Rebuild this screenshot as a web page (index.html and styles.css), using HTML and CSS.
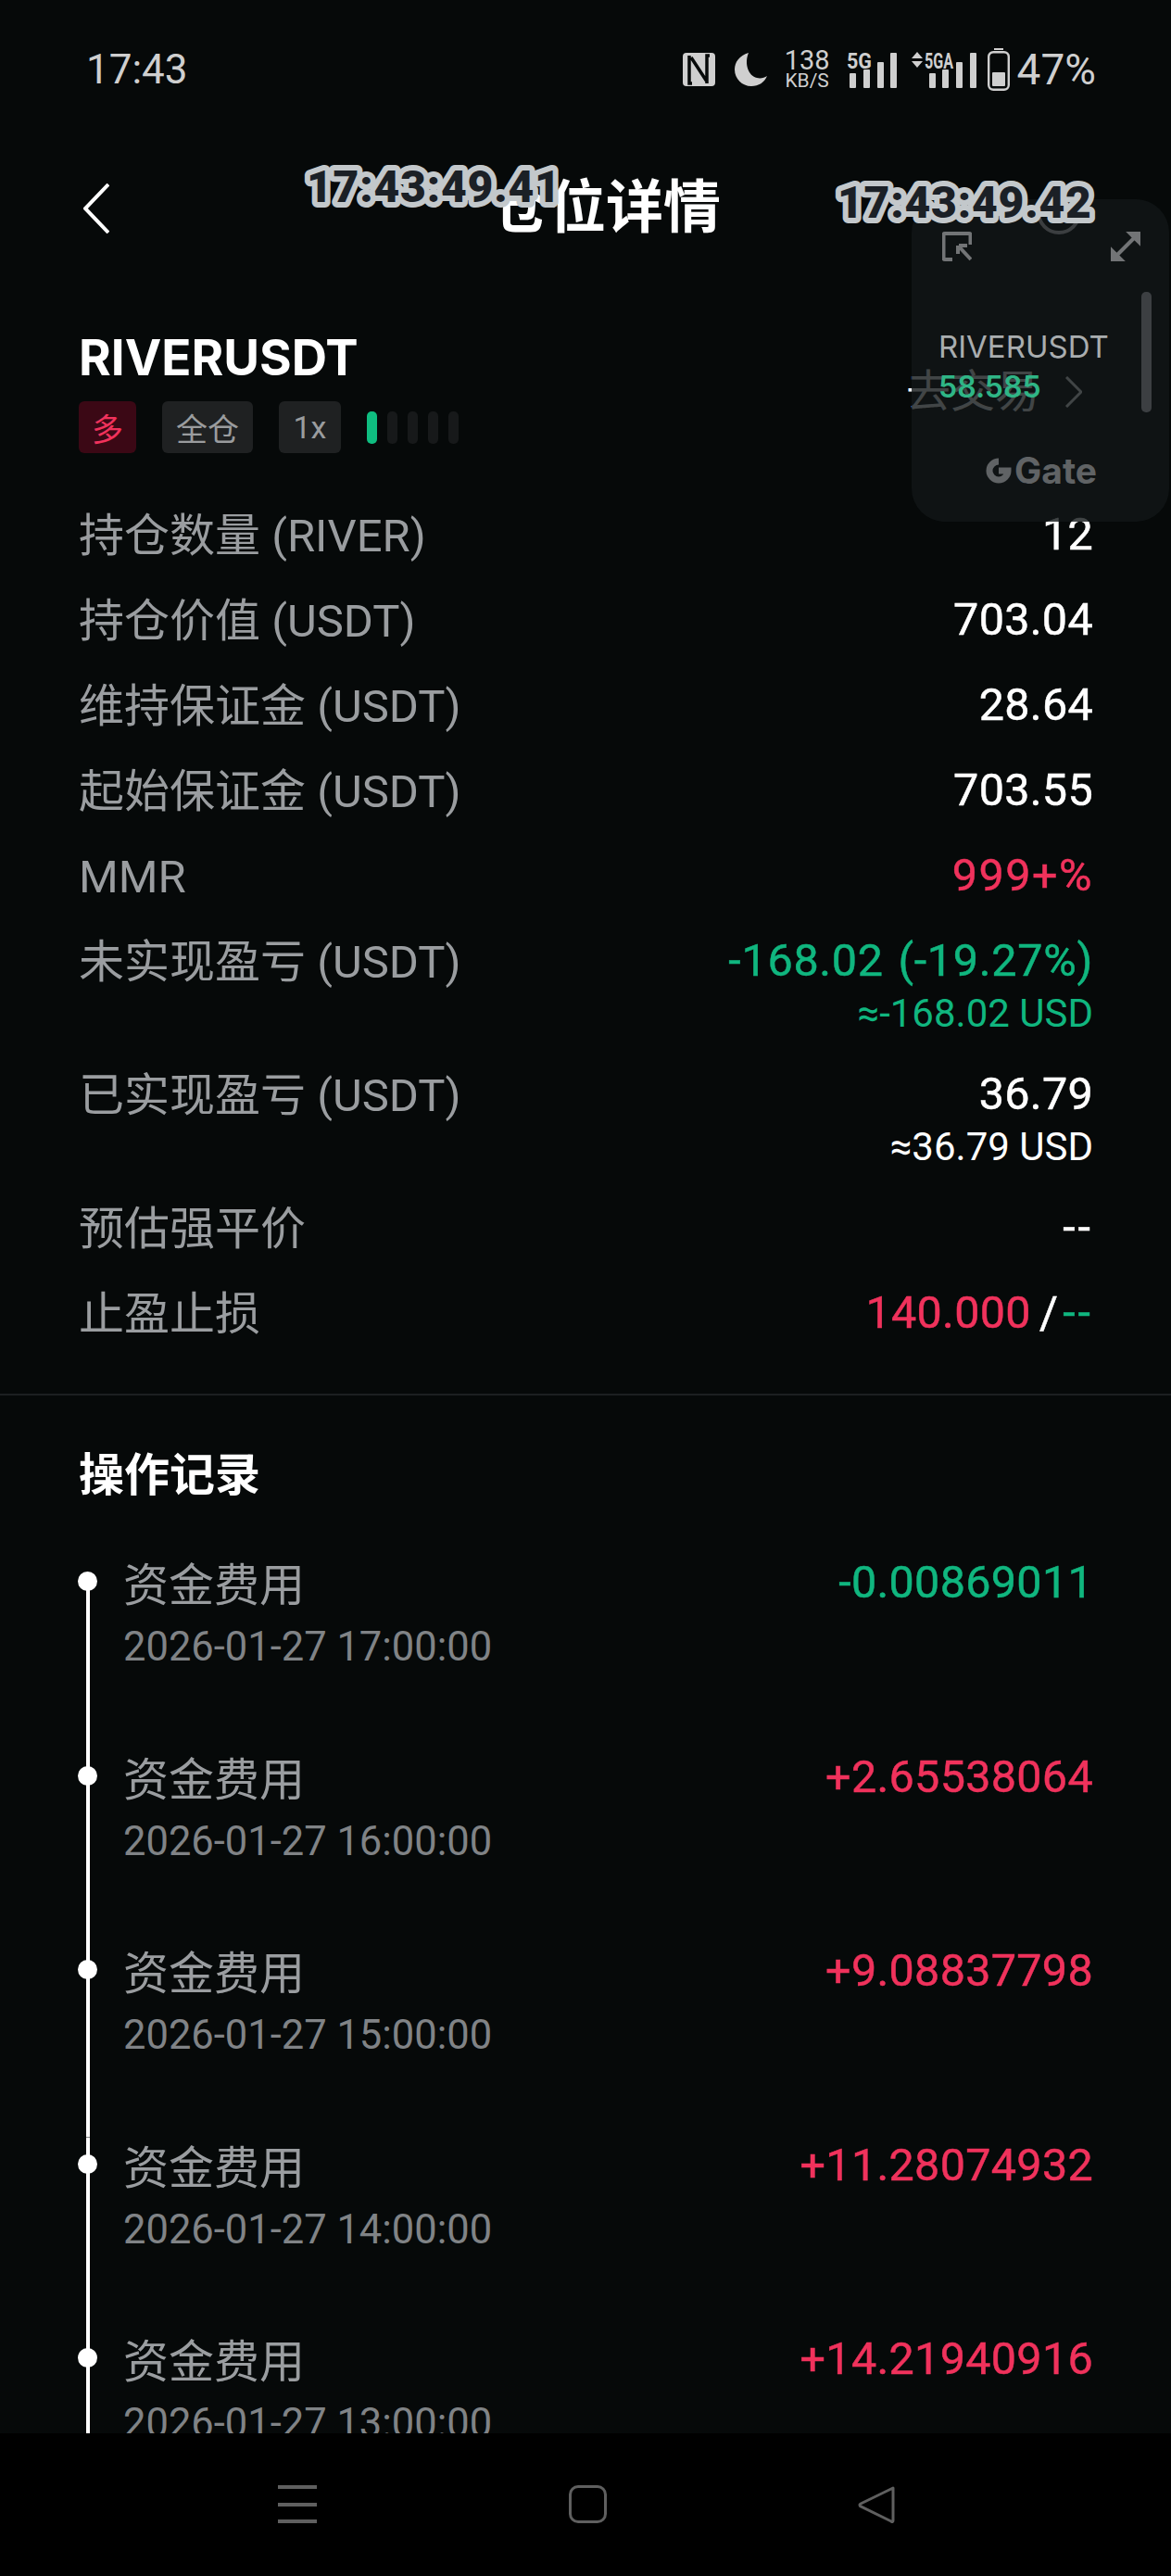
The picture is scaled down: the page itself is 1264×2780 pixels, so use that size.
FILE: index.html
```html
<!DOCTYPE html>
<html lang="zh">
<head>
<meta charset="utf-8">
<title>仓位详情</title>
<link rel="stylesheet" href="styles.css">
</head>
<body>
<div class="page">
  <main class="screen">
    <div class="status">
      <span class="clock">17:43</span>
      <div class="status-right">
        <svg class="ic-nfc" width="35" height="36" viewBox="0 0 35 36"><rect width="35" height="36" rx="4" fill="#cfcfcf"/><path d="M7 3v30h3M26 33V3h3M9 5l17 26" fill="none" stroke="#070a0a" stroke-width="3.5"/></svg>
        <svg class="ic-moon" width="35" height="36" viewBox="0 0 35 36"><path d="M15 0C5 3 0 10 0 18c0 10 8 18 18 18 8 0 14-4 17-11-3 2-7 3-11 2C15 25 10 12 15 0Z" fill="#cfcfcf"/></svg>
        <div class="speed"><span class="speed-num">138</span><span class="speed-unit">KB/S</span></div>
        <svg class="ic-sig1" width="54" height="40" viewBox="0 0 54 40"><text x="0" y="19" class="sig-text" textLength="27" lengthAdjust="spacingAndGlyphs">5G</text><rect x="3" y="24" width="7" height="16" rx="1" fill="#cfcfcf"/><rect x="18" y="20" width="7" height="20" rx="1" fill="#cfcfcf"/><rect x="33" y="12" width="7" height="28" rx="1" fill="#cfcfcf"/><rect x="47" y="2" width="7" height="38" rx="1" fill="#cfcfcf"/></svg>
        <svg class="ic-sig2" width="71" height="40" viewBox="0 0 71 40"><path d="M0 8 6 1l6 7ZM0 11l6 7 6-7Z" fill="#cfcfcf"/><text x="14" y="19" class="sig-text" textLength="31" lengthAdjust="spacingAndGlyphs">5GA</text><rect x="19" y="24" width="7" height="16" rx="1" fill="#cfcfcf"/><rect x="33" y="20" width="7" height="20" rx="1" fill="#cfcfcf"/><rect x="48" y="12" width="7" height="28" rx="1" fill="#cfcfcf"/><rect x="63" y="2" width="7" height="38" rx="1" fill="#cfcfcf"/></svg>
        <svg class="ic-batt" width="24" height="46" viewBox="0 0 24 46"><rect x="7" y="0" width="10" height="2" fill="#cfcfcf"/><rect x="1.200" y="4.200" width="21.600" height="40.600" rx="5" fill="none" stroke="#cfcfcf" stroke-width="2.400"/><rect x="5" y="26" width="14" height="15" rx="1" fill="#cfcfcf"/></svg>
        <span class="pct">47%</span>
      </div>
    </div>

    <header class="nav-head">
      <svg class="back" width="28" height="54" viewBox="0 0 28 54"><path d="M27 1 2 27l25 26" fill="none" stroke="#fff" stroke-width="4"/></svg>
      <h1 class="title">仓位详情</h1>
    </header>

    <section class="content">
      <div class="symbol-row">
        <div>
          <div class="symbol">RIVERUSDT</div>
          <div class="tags">
            <span class="tag tag-long">多</span>
            <span class="tag tag-cross">全仓</span>
            <span class="tag tag-lev">1x</span>
            <div class="risk"><i class="on"></i><i></i><i></i><i></i><i></i></div>
          </div>
        </div>
        <div class="trade"><span>去交易</span><svg width="18" height="34" viewBox="0 0 18 34"><path d="M1 1l16 16L1 33" fill="none" stroke="#fff" stroke-width="3"/></svg></div>
      </div>

      <div class="rows">
        <div class="row"><span class="label">持仓数量 (RIVER)</span><span class="val">12</span></div>
        <div class="row"><span class="label">持仓价值 (USDT)</span><span class="val">703.04</span></div>
        <div class="row"><span class="label">维持保证金 (USDT)</span><span class="val">28.64</span></div>
        <div class="row"><span class="label">起始保证金 (USDT)</span><span class="val">703.55</span></div>
        <div class="row"><span class="label">MMR</span><span class="val pct-val red">999+%</span></div>
        <div class="row tall"><span class="label">未实现盈亏 (USDT)</span><div class="val-stack"><span class="val pnl green">-168.02 (-19.27%)</span><span class="sub green">≈-168.02 USD</span></div></div>
        <div class="row tall"><span class="label">已实现盈亏 (USDT)</span><div class="val-stack"><span class="val">36.79</span><span class="sub">≈36.79 USD</span></div></div>
        <div class="row"><span class="label">预估强平价</span><span class="val dash">--</span></div>
        <div class="row"><span class="label">止盈止损</span><span class="val"><span class="red">140.000</span><span class="slash">/</span><span class="green dash">--</span></span></div>
      </div>
    </section>

    <div class="divider"></div>

    <section class="log">
      <h2 class="log-title">操作记录</h2>
      <div class="tl-item first"><div class="axis"><b class="dot"></b></div><div class="tl-body"><div class="tl-name">资金费用</div><div class="tl-date">2026-01-27 17:00:00</div></div><span class="val green">-0.00869011</span></div>
      <div class="tl-item"><div class="axis"><b class="dot"></b></div><div class="tl-body"><div class="tl-name">资金费用</div><div class="tl-date">2026-01-27 16:00:00</div></div><span class="val red">+2.65538064</span></div>
      <div class="tl-item"><div class="axis"><b class="dot"></b></div><div class="tl-body"><div class="tl-name">资金费用</div><div class="tl-date">2026-01-27 15:00:00</div></div><span class="val red">+9.08837798</span></div>
      <div class="tl-item"><div class="axis"><b class="dot"></b></div><div class="tl-body"><div class="tl-name">资金费用</div><div class="tl-date">2026-01-27 14:00:00</div></div><span class="val red">+11.28074932</span></div>
      <div class="tl-item"><div class="axis"><b class="dot"></b></div><div class="tl-body"><div class="tl-name">资金费用</div><div class="tl-date">2026-01-27 13:00:00</div></div><span class="val red">+14.21940916</span></div>
    </section>
  </main>

  <nav class="sysnav">
    <div class="menu"><i></i><i></i><i></i></div>
    <div class="home"></div>
    <svg class="sys-back" width="40" height="42" viewBox="0 0 40 42"><path d="M38 3 3 20c-1.300.6-1.300 1.700-.4 2.700L36 39c1.200 1 2 .5 2-1V3Z" fill="none" stroke="#5f5f5f" stroke-width="3" stroke-linejoin="round"/></svg>
  </nav>

  <aside class="float">
    <svg class="float-arc" width="56" height="40" viewBox="0 0 56 40"><path d="M6 6a22 22 0 0 0 44 0" fill="none" stroke="#3b3e40" stroke-width="4"/></svg>
    <div class="float-icons">
      <svg width="32" height="32" viewBox="0 0 32 32"><path d="M11 30H3a1.500 1.500 0 0 1-1.500-1.500V3.500A1.500 1.500 0 0 1 3 2h26a1.500 1.500 0 0 1 1.500 1.500V14" fill="none" stroke="#727476" stroke-width="4"/><path d="M18 15h9M17 15v9M18 16l13 14" fill="none" stroke="#727476" stroke-width="4"/></svg>
      <svg width="32" height="32" viewBox="0 0 32 32"><path d="M19 0h13v13zM0 32V19l13 13zM7 25 25 7" fill="#727476" stroke="#727476" stroke-width="4"/></svg>
    </div>
    <div class="float-sym">RIVERUSDT</div>
    <div class="float-price">58.585</div>
    <div class="float-logo">
      <svg width="29" height="28" viewBox="0 0 29 28"><path d="M14 4a10 10 0 1 0 10 10h-10" fill="none" stroke="#606365" stroke-width="7"/></svg>
      <span>Gate</span>
    </div>
    <div class="float-bar"></div>
  </aside>

  <svg class="stamp stamp-a" width="300" height="70" viewBox="0 0 300 70"><text x="10" y="52" class="stamp-text">17:43:49.41</text></svg>
  <svg class="stamp stamp-b" width="300" height="70" viewBox="0 0 300 70"><text x="10" y="52" class="stamp-text">17:43:49.42</text></svg>
</div>
</body>
</html>
```

FILE: styles.css
```css
* { box-sizing: border-box; }
html, body { margin: 0; padding: 0; background: #060909; }
body { font-family: Roboto, "Noto Sans CJK SC", sans-serif; }

.page {
  position: relative;
  width: 1264px;
  height: 2780px;
  display: flex;
  flex-direction: column;
  overflow: hidden;
  color: #fff;
}
.screen { flex: 1; min-height: 0; overflow: hidden; }

/* status bar */
.status {
  height: 150px;
  padding: 0 81px 0 93px;
  display: flex;
  justify-content: space-between;
  align-items: center;
  color: #cfcfcf;
}
.clock, .pct { font-size: 44px; line-height: 50px; }
.status-right { display: flex; align-items: center; }
.status-right svg { overflow: visible; }
.ic-moon { margin-left: 21px; }
.speed { margin-left: 19px; width: 49px; display: flex; flex-direction: column; align-items: center; }
.speed-num { font-size: 29px; line-height: 25px; }
.speed-unit { font-size: 21px; line-height: 19px; }
.ic-sig1 { margin-left: 18px; }
.ic-sig2 { margin-left: 16px; }
.ic-batt { margin-left: 11px; }
.pct { margin-left: 8px; font-size: 46px; }
.sig-text { font-family: Roboto, sans-serif; font-size: 24px; font-weight: 700; fill: #cfcfcf; }

/* header */
.nav-head {
  height: 150px;
  padding-left: 90px;
  display: flex;
  align-items: center;
}
.title {
  margin: 0 0 0 412px;
  font-size: 62px;
  line-height: 70px;
  font-weight: 700;
  color: #fff;
}

/* position block */
.content { padding: 56px 84px 0 85px; }
.symbol-row { display: flex; justify-content: space-between; align-items: center; }
.symbol { font-family: Inter, sans-serif; font-size: 53px; line-height: 60px; font-weight: 700; }
.tags { margin-top: 17px; display: flex; align-items: center; }
.tag {
  height: 56px;
  display: flex;
  align-items: center;
  justify-content: center;
  border-radius: 6px;
  font-size: 34px;
  color: #9a9c9e;
  background: #1f2122;
}
.tag-long { width: 62px; background: #3b0815; color: #f0325c; }
.tag-cross { width: 98px; margin-left: 28px; }
.tag-lev { width: 67px; margin-left: 28px; }
.risk { margin-left: 28px; display: flex; gap: 11px; }
.risk i { width: 11px; height: 35px; border-radius: 5px; background: #17191a; }
.risk i.on { background: #0fbd80; }
.trade { margin-right: 12px; display: flex; align-items: center; gap: 28px; font-size: 48px; line-height: 60px; }

.rows { margin-top: 42px; }
.row {
  display: flex;
  justify-content: space-between;
  align-items: flex-start;
  padding: 16px 0;
}
.row.tall { padding-bottom: 15px; }
.label { font-size: 49px; line-height: 64px; margin-bottom: -4px; color: #9a9da0; }
.val {
  font-size: 48.500px;
  line-height: 60px;
  letter-spacing: .3px;
  color: #fff;
  -webkit-text-stroke: .5px currentColor;
}
.val.pnl { letter-spacing: .7px; word-spacing: 3px; }
.val.pct-val { letter-spacing: 1.500px; }
.val-stack { display: flex; flex-direction: column; align-items: flex-end; }
.sub { font-size: 42px; line-height: 53px; color: #fff; }
.red { color: #f0325c; }
.green { color: #10b67f; }
.dash { letter-spacing: 3px; }
.slash { margin: 0 5px 0 9px; }

.divider { height: 2px; margin-top: 41px; background: #1c1f21; }

/* timeline */
.log { padding: 57px 84px 0 84px; }
.log-title { margin: 0 0 55px 1px; font-size: 49px; line-height: 60px; font-weight: 700; color: #fff; }
.tl-item { height: 209.5px; display: flex; align-items: flex-start; justify-content: space-between; }
.axis {
  width: 21px;
  height: 100%;
  flex: none;
  padding-top: 18px;
  background: linear-gradient(#fff, #fff) center bottom / 4px 100% no-repeat;
}
.first .axis { background-size: 4px calc(100% - 28px); }
.dot { display: block; width: 21px; height: 21px; border-radius: 50%; background: #fff; }
.tl-body { flex: 1; margin-left: 28px; }
.tl-name { font-size: 49px; line-height: 67px; margin-bottom: -7px; color: #9a9da0; }
.tl-date { font-size: 43.500px; line-height: 79px; color: #808386; }

/* system nav */
.sysnav {
  flex: none;
  height: 154px;
  background: #000;
  padding: 56px 298px 0 300px;
  display: flex;
  justify-content: space-between;
  align-items: flex-start;
}
.menu { width: 42px; height: 41px; display: flex; flex-direction: column; justify-content: space-between; }
.menu i { display: block; height: 4px; background: #5f5f5f; }
.home { width: 41px; height: 41px; border: 3px solid #5f5f5f; border-radius: 10px; }

/* floating window + overlays */
.float {
  position: absolute;
  left: 984px;
  top: 215px;
  width: 278px;
  height: 348px;
  border-radius: 36px;
  background: rgba(17, 22, 24, .8);
}
.float-arc { position: absolute; left: 131px; top: 8px; }
.float-icons { position: absolute; left: 33px; right: 31px; top: 35px; display: flex; justify-content: space-between; }
.float-sym { position: absolute; left: 29px; top: 141px; font-family: Inter, sans-serif; font-size: 33px; line-height: 36px; color: #a9adaf; }
.float-price { position: absolute; left: 29px; top: 184px; font-family: Inter, sans-serif; font-size: 32px; line-height: 38px; font-weight: 600; color: #2fb586; }
.float-logo { position: absolute; left: 80px; top: 271px; display: flex; align-items: center; gap: 2px; font-family: Inter, sans-serif; font-size: 39px; line-height: 44px; font-weight: 700; color: #606365; }
.float-bar { position: absolute; left: 248px; top: 100px; width: 11px; height: 130px; border-radius: 5px; background: #3c3f42; }

.stamp { position: absolute; }
.stamp-text {
  font-family: Roboto, sans-serif;
  font-size: 48px;
  font-weight: 900;
  letter-spacing: .8px;
  fill: #1b2026;
  stroke: #c3c8cb;
  stroke-width: 12px;
  stroke-linejoin: round;
  paint-order: stroke fill;
}
.stamp-a { left: 321px; top: 166px; }
.stamp-b { left: 894px; top: 183px; }
```
